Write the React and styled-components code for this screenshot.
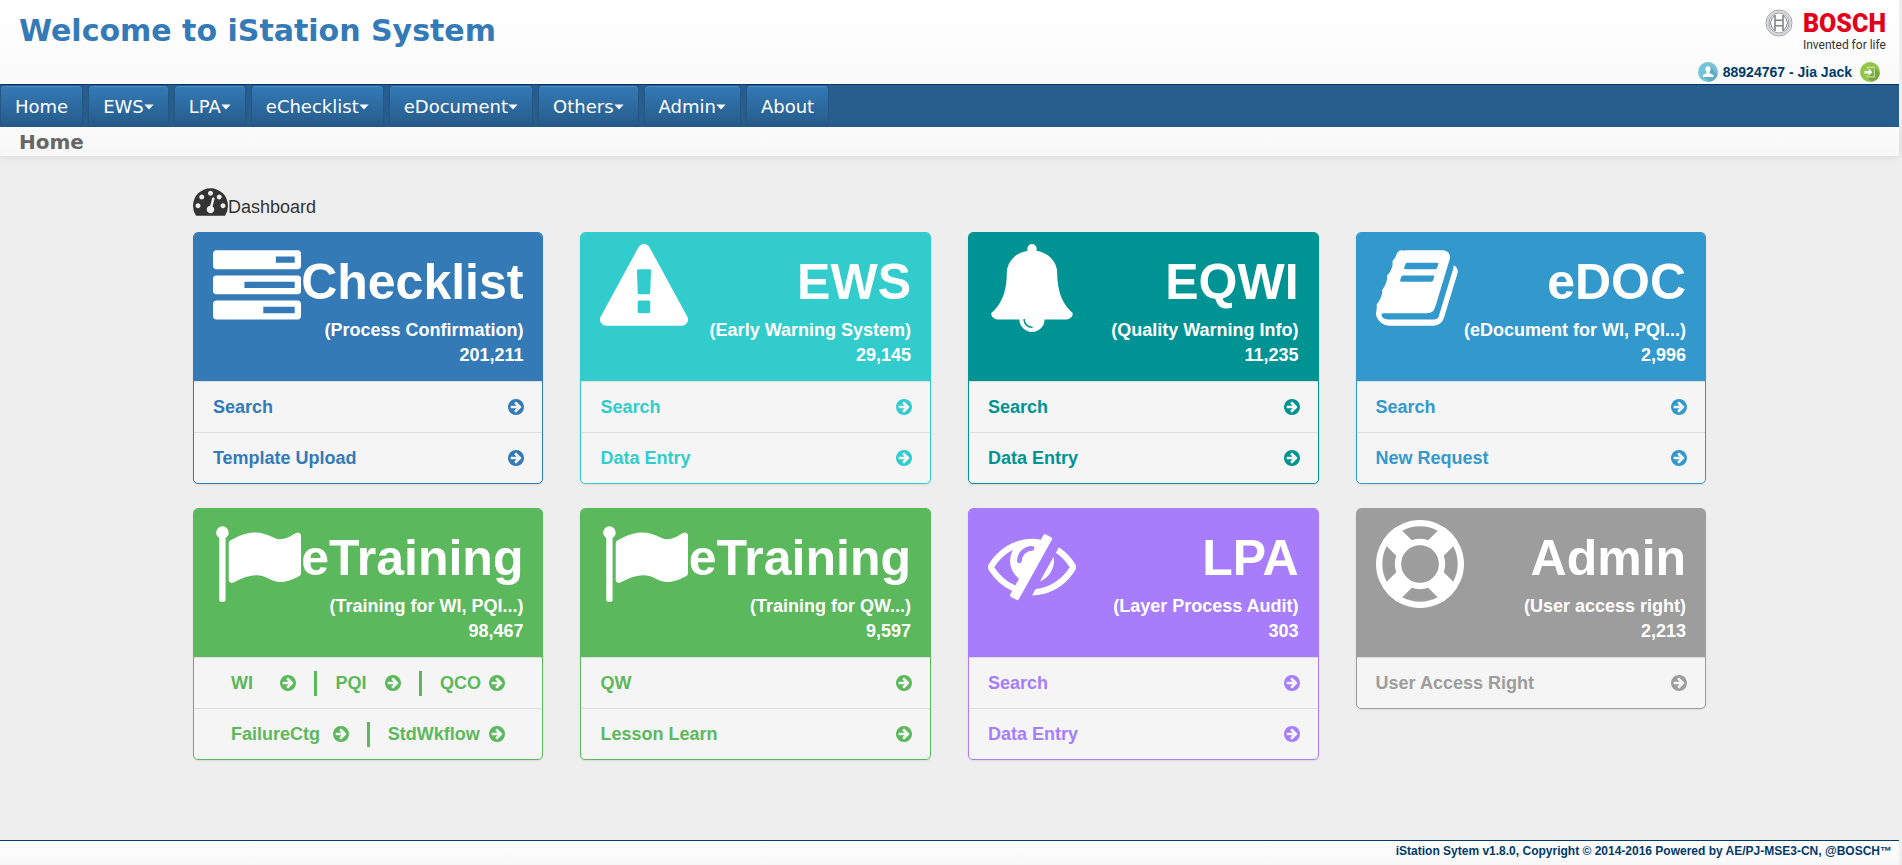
import React from "react";
import styled, { createGlobalStyle } from "styled-components";

const GlobalStyle = createGlobalStyle`
  *, *::before, *::after { box-sizing: border-box; }
  body {
    margin: 0;
    background: #eee;
    color: #333;
    font-family: "Liberation Sans", Arial, sans-serif;
    font-size: 18px;
  }
  h1, h2, h3, p { margin: 0; }
  a { color: inherit; text-decoration: none; }
`;

const wide = `"DejaVu Sans", Verdana, sans-serif`;

const Page = styled.div`
  display: flex;
  flex-direction: column;
  min-height: 100vh;
  margin-right: 3px;
`;

const Header = styled.header`
  display: flex;
  justify-content: space-between;
  height: 84px;
  background: linear-gradient(#fff, #fafafa);
`;

const SiteTitle = styled.h1`
  padding: 13px 0 0 19px;
  color: #337ab7;
  font: bold 30px/36px ${wide};
`;

const HeaderSide = styled.div`
  display: flex;
  flex-direction: column;
  align-items: flex-end;
  justify-content: space-between;
  padding: 9px 13px 2px 0;
`;

const Brand = styled.div`
  display: flex;
  gap: 10px;
  font-family: Roboto, sans-serif;
`;

const BrandText = styled.div`
  display: flex;
  flex-direction: column;
`;

const BrandName = styled.span`
  color: #e2001a;
  font-size: 25px;
  line-height: 30px;
  font-weight: 900;
`;

const BrandLine = styled.span`
  color: #333;
  font-size: 12px;
  line-height: 12px;
`;

const UserBar = styled.div`
  display: flex;
  align-items: center;
  gap: 8px;
  padding-right: 6px;
  color: #003a6a;
  font-size: 14px;
  line-height: 20px;
  font-weight: bold;
`;

const UserName = styled.span`
  display: flex;
  align-items: center;
  gap: 5px;
`;

const IconButton = styled.button`
  display: flex;
  padding: 0;
  border: 0;
  background: none;
`;

const Nav = styled.nav`
  display: flex;
  gap: 7px;
  height: 43px;
  padding: 1px 1px 0;
  border-top: 1px solid #003a6a;
  background: #285e8e;
`;

const Tab = styled.button`
  display: flex;
  align-items: center;
  height: 41px;
  padding: 0 14px;
  border: 0;
  border-radius: 4px;
  background: linear-gradient(#337ab7, #265a88);
  box-shadow: inset 0 1px 0 rgba(255, 255, 255, 0.15), 0 0 2px rgba(0, 0, 0, 0.25);
  color: #fff;
  font: 18px/24px ${wide};
`;

const Crumb = styled.h2`
  height: 29px;
  padding: 3px 19px 0;
  background: linear-gradient(#fbfbfb, #f7f7f7);
  box-shadow: 0 1px 8px rgba(0, 0, 0, 0.1);
  color: #666;
  font: bold 20px/25px ${wide};
`;

const Main = styled.main`
  flex: 1;
  width: 80%;
  margin: 0 auto;
  padding: 32px 3px 24px;
`;

const Dashboard = styled.h3`
  display: flex;
  align-items: flex-end;
  margin-bottom: 16px;
  font-size: 18px;
  line-height: 18px;
  font-weight: normal;
`;

const Cards = styled.div`
  display: grid;
  grid-template-columns: repeat(4, minmax(0, 1fr));
  align-items: start;
  gap: 24px 37px;
`;

const Card = styled.section`
  overflow: hidden;
  border: 1px solid ${(p) => p.$color};
  border-radius: 5px;
  background: #f5f5f5;
  box-shadow: 0 1px 2px rgba(0, 0, 0, 0.08);
  color: ${(p) => p.$color};
  font-weight: bold;
`;

const CardHead = styled.div`
  display: flex;
  justify-content: space-between;
  padding: 11px 19px 13px;
  background: ${(p) => p.$color};
  color: #fff;
`;

const CardText = styled.div`
  flex: 1;
  min-width: 0;
  padding-top: 3px;
  line-height: 25px;
  text-align: right;
  white-space: nowrap;
`;

const CardTitle = styled.h3`
  margin-bottom: 1px;
  font-size: 50px;
  line-height: 70px;
`;

const Row = styled.div`
  display: flex;
  align-items: center;
  gap: 18px;
  height: 51px;
  padding: 0 ${(p) => (p.$split ? 37 : 18)}px 0 ${(p) => (p.$split ? 37 : 19)}px;
  border-top: 1px solid #ddd;
`;

const RowLink = styled.a`
  display: flex;
  flex: 1;
  align-items: center;
  justify-content: space-between;
  white-space: nowrap;
`;

const Divider = styled.span`
  width: 3px;
  height: 25px;
  background: currentColor;
`;

const Footer = styled.footer`
  height: 25px;
  padding-right: 7px;
  border-top: 1px solid #003a6a;
  background: linear-gradient(#fff, #f7f7f7);
  color: #003a6a;
  font-size: 12px;
  line-height: 20px;
  font-weight: bold;
  text-align: right;
`;

const Glyph = styled.svg.attrs({ "aria-hidden": true })`
  display: block;
  flex: none;
  fill: currentColor;
`;

const paths = {
  tasks:
    "M1024 1408h640v-128h-640v128zm-384-512h1024v-128h-1024v128zm640-512h384v-128h-384v128zm512 832v256q0 26-19 45t-45 19h-1664q-26 0-45-19t-19-45v-256q0-26 19-45t45-19h1664q26 0 45 19t19 45zm0-512v256q0 26-19 45t-45 19h-1664q-26 0-45-19t-19-45v-256q0-26 19-45t45-19h1664q26 0 45 19t19 45zm0-512v256q0 26-19 45t-45 19h-1664q-26 0-45-19t-19-45v-256q0-26 19-45t45-19h1664q26 0 45 19t19 45z",
  warning:
    "M1024 1375v-190q0-14-9.5-23.5t-22.5-9.5h-192q-13 0-22.5 9.5t-9.5 23.5v190q0 14 9.5 23.5t22.5 9.5h192q13 0 22.5-9.5t9.5-23.5zm-2-374l18-459q0-12-10-19-13-11-24-11h-220q-11 0-24 11-10 7-10 21l17 457q0 10 10 16.5t24 6.5h185q14 0 23.5-6.5t10.5-16.5zm-14-934l768 1408q35 63-2 126-17 29-46.5 46t-63.5 17h-1536q-34 0-63.5-17t-46.5-46q-37-63-2-126l768-1408q17-31 47-49t65-18 65 18 47 49z",
  bell:
    "M912 1696q0-16-16-16-59 0-101.5-42.5t-42.5-101.5q0-16-16-16t-16 16q0 73 51.5 124.5t124.5 51.5q16 0 16-16zm816-288q0 52-38 90t-90 38h-448q0 106-75 181t-181 75-181-75-75-181h-448q-52 0-90-38t-38-90q50-42 91-88t85-119.5 74.5-158.5 50-206 19.5-260q0-152 117-282.5t307-158.5q-8-19-8-39 0-40 28-68t68-28 68 28 28 68q0 20-8 39 190 28 307 158.5t117 282.5q0 139 19.5 260t50 206 74.5 158.5 85 119.5 91 88z",
  book:
    "M1703 478q40 57 18 129l-275 906q-19 64-76.5 107.5t-122.5 43.5h-923q-77 0-148.5-53.5t-99.5-131.5q-24-67-2-127 0-4 3-27t4-37q1-8-3-21.5t-3-19.5q2-11 8-21t16.5-23.5 16.5-23.5q23-38 45-91.5t30-91.5q3-10 .5-30t-.5-28q3-11 17-28t17-23q21-36 42-92t25-90q1-9-2.5-32t.5-28q4-13 22-30.5t22-22.5q19-26 42.5-84.5t27.5-96.5q1-8-3-25.5t-2-26.5q2-8 9-18t18-23 17-21q8-12 16.5-30.5t15-35 16-36 19.5-32 26.5-23.5 36-11.5 47.5 5.5l-1 3q38-9 51-9h761q74 0 114 56t18 130l-274 906q-36 119-71.5 153.5t-128.5 34.5h-869q-27 0-38 15-11 16-1 43 24 70 144 70h923q29 0 56-15.5t35-41.5l300-987q7-22 5-57 38 15 59 43zm-1064 2q-4 13 2 22.5t20 9.5h608q13 0 25.5-9.5t16.5-22.5l21-64q4-13-2-22.5t-20-9.5h-608q-13 0-25.5 9.5t-16.5 22.5zm-83 256q-4 13 2 22.5t20 9.5h608q13 0 25.5-9.5t16.5-22.5l21-64q4-13-2-22.5t-20-9.5h-608q-13 0-25.5 9.5t-16.5 22.5z",
  flag:
    "M320 256q0 72-64 110v1266q0 13-9.5 22.5t-22.5 9.5h-64q-13 0-22.5-9.5t-9.5-22.5v-1266q-64-38-64-110 0-53 37.5-90.5t90.5-37.5 90.5 37.5 37.5 90.5zm1472 64v763q0 25-12.5 38.5t-39.5 27.5q-215 116-369 116-61 0-123.5-22t-108.5-48-115.5-48-142.5-22q-192 0-464 146-17 9-33 9-26 0-45-19t-19-45v-742q0-32 31-55 21-14 79-43 236-120 421-120 107 0 200 29t219 88q38 19 88 19 54 0 117.5-21t110-47 88-47 54.5-21q26 0 45 19t19 45z",
  eye:
    "M555 1335l78-141q-87-63-136-159t-49-203q0-121 61-225-229 117-381 353 167 258 427 375zm389-759q0-20-14-34t-34-14q-125 0-214.5 89.5t-89.5 214.5q0 20 14 34t34 14 34-14 14-34q0-86 61-147t147-61q20 0 34-14t14-34zm363-191q0 7-1 9-106 189-316 567t-315 566l-49 89q-10 16-28 16-12 0-134-70-16-10-16-28 0-12 44-87-143-65-263.5-173t-208.5-245q-20-31-20-69t20-69q153-235 380-371t496-136q89 0 180 17l54-97q10-16 28-16 5 0 18 6t31 15.5 33 18.5 31.5 18.5 19.5 11.5q16 10 16 27zm37 447q0 139-79 253.5t-209 164.5l280-502q8 45 8 84zm448 128q0 35-20 69-39 64-109 145-150 172-347.5 267t-419.5 95l74-132q212-18 392.5-137t301.5-307q-115-179-282-294l63-112q95 64 182.5 153t144.5 184q20 34 20 69z",
  ring:
    "M896 0q182 0 348 71t286 191 191 286 71 348-71 348-191 286-286 191-348 71-348-71-286-191-191-286-71-348 71-348 191-286 286-191 348-71zm0 128q-190 0-361 90l194 194q82-28 167-28t167 28l194-194q-171-90-361-90zm-678 1129l194-194q-28-82-28-167t28-167l-194-194q-90 171-90 361t90 361zm678 407q190 0 361-90l-194-194q-82 28-167 28t-167-28l-194 194q171 90 361 90zm0-384q159 0 271.5-112.5t112.5-271.5-112.5-271.5-271.5-112.5-271.5 112.5-112.5 271.5 112.5 271.5 271.5 112.5zm484-217l194 194q90-171 90-361t-90-361l-194 194q28 82 28 167t-28 167z",
  gauge:
    "M384 1152q0-53-37.5-90.5t-90.5-37.5-90.5 37.5-37.5 90.5 37.5 90.5 90.5 37.5 90.5-37.5 37.5-90.5zm192-448q0-53-37.5-90.5t-90.5-37.5-90.5 37.5-37.5 90.5 37.5 90.5 90.5 37.5 90.5-37.5 37.5-90.5zm428 481l101-382q6-26-7.5-48.5t-38.5-29.5-48 6.5-30 39.5l-101 382q-60 5-107 43.5t-63 98.5q-20 77 20 146t117 89 146-20 89-117q16-60-6-117t-72-91zm660-33q0-53-37.5-90.5t-90.5-37.5-90.5 37.5-37.5 90.5 37.5 90.5 90.5 37.5 90.5-37.5 37.5-90.5zm-640-640q0-53-37.5-90.5t-90.5-37.5-90.5 37.5-37.5 90.5 37.5 90.5 90.5 37.5 90.5-37.5 37.5-90.5zm448 192q0-53-37.5-90.5t-90.5-37.5-90.5 37.5-37.5 90.5 37.5 90.5 90.5 37.5 90.5-37.5 37.5-90.5zm320 448q0 261-141 483-19 29-54 29h-1402q-35 0-54-29-141-221-141-483 0-182 71-348t191-286 286-191 348-71 348 71 286 191 191 286 71 348z",
  arrow:
    "M1413 896q0-27-18-45l-91-91-362-362q-18-18-45-18t-45 18l-91 91q-18 18-18 45t18 45l189 189h-502q-26 0-45 19t-19 45v128q0 26 19 45t45 19h502l-189 189q-18 18-18 45t18 45l91 91q18 18 45 18t45-18l362-362 91-91q18-18 18-45zm251 0q0 209-103 385.5t-279.5 279.5-385.5 103-385.5-103-279.5-279.5-103-385.5 103-385.5 279.5-279.5 385.5-103 385.5 103 279.5 279.5 103 385.5z",
};

const CardIcon = ({ name }) => (
  <Glyph width="88" height="88" viewBox={name === "book" ? "64 0 1792 1792" : "0 0 1792 1792"}>
    <path d={paths[name]} />
  </Glyph>
);

const Arrow = () => (
  <Glyph width="16" height="16" viewBox="128 128 1536 1536">
    <path d={paths.arrow} />
  </Glyph>
);

const Caret = () => (
  <Glyph width="10" height="6" viewBox="0 0 10 6">
    <path d="M0.4 0.5h9.2L5 5.4z" />
  </Glyph>
);

const Emblem = () => (
  <Glyph width="28" height="28" viewBox="0 0 28 28">
    <g fill="none" stroke="#7f868b">
      <circle cx="14" cy="14" r="13" stroke="#9aa0a4" />
      <circle cx="14" cy="14" r="11.4" stroke="#d3d6d8" strokeWidth="1.8" />
      <circle cx="14" cy="14" r="10" strokeWidth="0.8" />
      <path d="M10 6v16M18 6v16M10 11.2h8M10 16.8h8" strokeWidth="1.6" />
      <path d="M10 6q-9 8 0 16M18 6q9 8 0 16" strokeWidth="1" />
    </g>
  </Glyph>
);

const UserIcon = () => (
  <Glyph width="20" height="20" viewBox="0 0 20 20">
    <circle cx="10" cy="10" r="10" fill="#74c3d8" />
    <path d="M12 4.5l7.6 8a10 10 0 0 1-7.4 7.2L5.5 15z" fill="#5fadc4" />
    <path d="M10 4.2c1.8 0 2.7 1.3 2.6 3-.1 1.2-.5 2-1.1 2.7v1.3l3.5 1.5c.5.3.6.8.6 2.3H4.9c0-1.5.1-2 .6-2.3L8.500 11.2V9.9C7.9 9.2 7.5 8.4 7.4 7.2c-.1-1.7.8-3 2.6-3z" fill="#fff" />
  </Glyph>
);

const LogoutIcon = () => (
  <Glyph width="20" height="20" viewBox="0 0 20 20">
    <circle cx="10" cy="10" r="10" fill="#93c54b" />
    <path d="M14.5 5l5.3 6a10 10 0 0 1-8 8.8L7 15z" fill="#79a843" />
    <path d="M7.5 7V5.4h6.8v9.4H7.500v-1.6" fill="none" stroke="#c5dd9e" strokeWidth="1.2" />
    <path d="M4.5 9h4.3V6.700l3.7 3.5-3.7 3.5v-2.3H4.5z" fill="#fff" />
  </Glyph>
);

const tabs = [
  ["Home"],
  ["EWS", true],
  ["LPA", true],
  ["eChecklist", true],
  ["eDocument", true],
  ["Others", true],
  ["Admin", true],
  ["About"],
];

const cards = [
  { icon: "tasks", color: "#337ab7", title: "Checklist", note: "(Process Confirmation)", count: "201,211", rows: [["Search"], ["Template Upload"]] },
  { icon: "warning", color: "#33cccc", title: "EWS", note: "(Early Warning System)", count: "29,145", rows: [["Search"], ["Data Entry"]] },
  { icon: "bell", color: "#009393", title: "EQWI", note: "(Quality Warning Info)", count: "11,235", rows: [["Search"], ["Data Entry"]] },
  { icon: "book", color: "#3399cc", title: "eDOC", note: "(eDocument for WI, PQI...)", count: "2,996", rows: [["Search"], ["New Request"]] },
  { icon: "flag", color: "#5cb85c", title: "eTraining", note: "(Training for WI, PQI...)", count: "98,467", rows: [["WI", "PQI", "QCO"], ["FailureCtg", "StdWkflow"]] },
  { icon: "flag", color: "#5cb85c", title: "eTraining", note: "(Training for QW...)", count: "9,597", rows: [["QW"], ["Lesson Learn"]] },
  { icon: "eye", color: "#a77dfb", title: "LPA", note: "(Layer Process Audit)", count: "303", rows: [["Search"], ["Data Entry"]] },
  { icon: "ring", color: "#9d9d9d", title: "Admin", note: "(User access right)", count: "2,213", rows: [["User Access Right"]] },
];

export default function App() {
  return (
    <Page>
      <GlobalStyle />
      <Header>
        <SiteTitle>Welcome to iStation System</SiteTitle>
        <HeaderSide>
          <Brand>
            <Emblem />
            <BrandText>
              <BrandName>BOSCH</BrandName>
              <BrandLine>Invented for life</BrandLine>
            </BrandText>
          </Brand>
          <UserBar>
            <UserName>
              <UserIcon />
              88924767 - Jia Jack
            </UserName>
            <IconButton type="button" aria-label="Log out">
              <LogoutIcon />
            </IconButton>
          </UserBar>
        </HeaderSide>
      </Header>
      <Nav>
        {tabs.map(([label, menu]) => (
          <Tab key={label} type="button">
            {label}
            {menu && <Caret />}
          </Tab>
        ))}
      </Nav>
      <Crumb>Home</Crumb>
      <Main>
        <Dashboard>
          <Glyph width="35" height="28" viewBox="0 256 1792 1408">
            <path d={paths.gauge} />
          </Glyph>
          Dashboard
        </Dashboard>
        <Cards>
          {cards.map((card) => (
            <Card key={card.title + card.note} $color={card.color}>
              <CardHead $color={card.color}>
                <CardIcon name={card.icon} />
                <CardText>
                  <CardTitle>{card.title}</CardTitle>
                  <p>{card.note}</p>
                  <p>{card.count}</p>
                </CardText>
              </CardHead>
              {card.rows.map((links) => (
                <Row key={links[0]} $split={links.length > 1}>
                  {links.map((label, i) => (
                    <React.Fragment key={label}>
                      {i > 0 && <Divider />}
                      <RowLink href="#">
                        {label}
                        <Arrow />
                      </RowLink>
                    </React.Fragment>
                  ))}
                </Row>
              ))}
            </Card>
          ))}
        </Cards>
      </Main>
      <Footer>iStation Sytem v1.8.0, Copyright © 2014-2016 Powered by AE/PJ-MSE3-CN, @BOSCH™</Footer>
    </Page>
  );
}
